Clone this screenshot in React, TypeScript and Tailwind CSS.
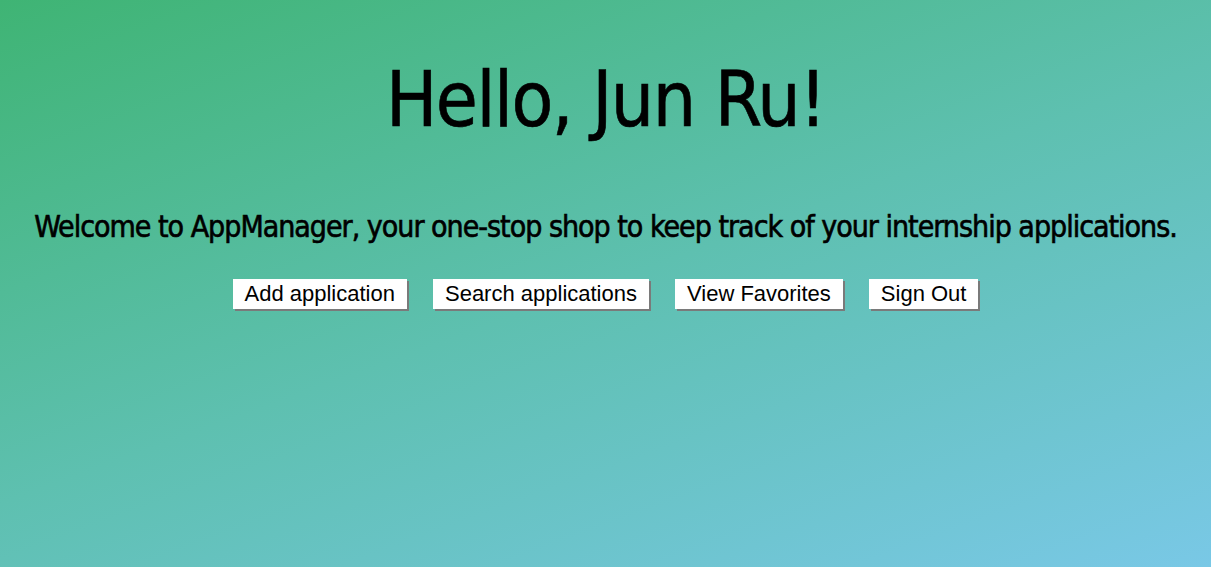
export default function App() {
  const btn =
    "bg-white text-black px-[12px] h-[30px] text-[22px] leading-none shadow-[2px_2px_0_#7a7a7a] [font-family:'Liberation_Sans',Arial,sans-serif]";
  return (
    <div className="w-full h-[567px] bg-[linear-gradient(160deg,#3fb474_0%,#5ec0b0_50%,#79c8e6_100%)] flex flex-col items-center text-black [font-family:'DejaVu_Sans_Condensed',sans-serif]">
      <h1 className="mt-[58px] text-[76px] leading-[84px] tracking-[-1.5px] [-webkit-text-stroke:0.6px_black]">Hello, Jun Ru!</h1>
      <p className="mt-[67px] text-[30px] leading-[36px] tracking-[-1px] whitespace-nowrap [-webkit-text-stroke:0.6px_black]">
        Welcome to AppManager, your one-stop shop to keep track of your internship applications.
      </p>
      <div className="mt-[34px] flex gap-[26px]">
        <button className={btn}>Add application</button>
        <button className={btn}>Search applications</button>
        <button className={btn}>View Favorites</button>
        <button className={btn}>Sign Out</button>
      </div>
    </div>
  );
}
